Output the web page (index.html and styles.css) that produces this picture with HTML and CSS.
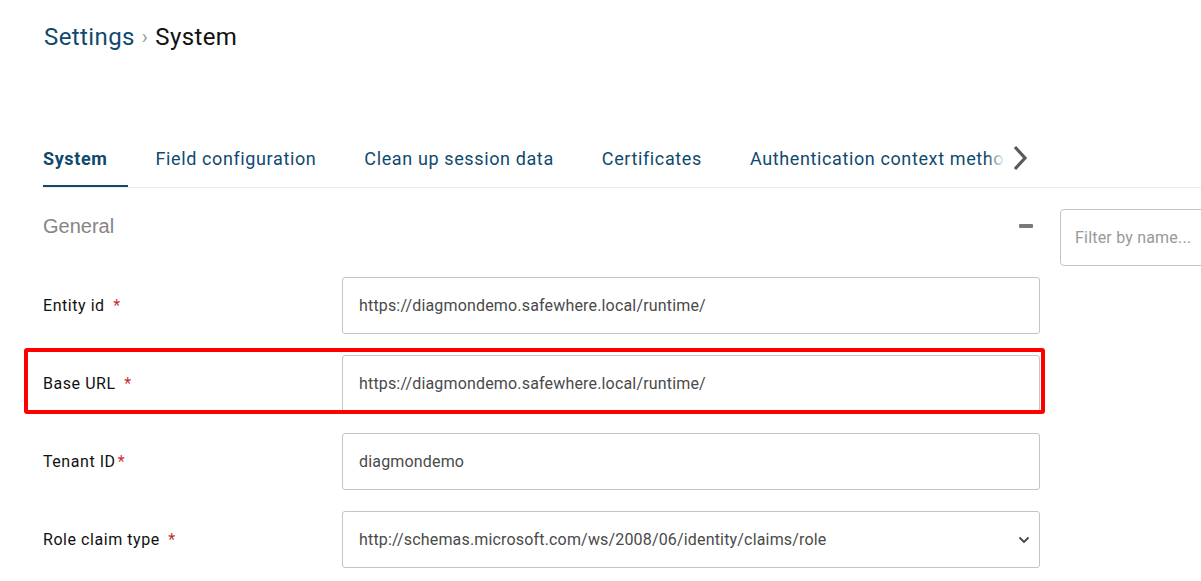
FILE: index.html
```html
<!DOCTYPE html>
<html>
<head>
<meta charset="utf-8">
<link rel="stylesheet" href="styles.css">
</head>
<body>
<div class="page">
  <div class="breadcrumb">
    <span class="crumb-link">Settings</span>
    <span class="crumb-sep">›</span>
    <span class="crumb-current">System</span>
  </div>

  <div class="tabbar">
    <div class="tabs-viewport">
      <div class="tabs">
        <div class="tab active">System</div>
        <div class="tab">Field configuration</div>
        <div class="tab">Clean up session data</div>
        <div class="tab">Certificates</div>
        <div class="tab">Authentication context methods</div>
      </div>
      <div class="tabs-fade"></div>
    </div>
    <button class="tabs-next" aria-label="Next">
      <svg width="20" height="26" viewBox="0 0 20 26"><path d="M5 2 L15 13 L5 24" fill="none" stroke="#5a5a5a" stroke-width="3.2" stroke-linecap="butt" stroke-linejoin="miter"/></svg>
    </button>
  </div>

  <div class="content">
    <div class="main">
      <div class="section-head">
        <span class="section-title">General</span>
        <span class="collapse"></span>
      </div>

      <div class="row">
        <label class="label">Entity id <span class="req">*</span></label>
        <div class="field">https://diagmondemo.safewhere.local/runtime/</div>
      </div>
      <div class="row highlighted">
        <label class="label">Base URL <span class="req">*</span></label>
        <div class="field">https://diagmondemo.safewhere.local/runtime/</div>
        <span class="annot"></span>
      </div>
      <div class="row">
        <label class="label">Tenant ID<span class="req tight">*</span></label>
        <div class="field">diagmondemo</div>
      </div>
      <div class="row">
        <label class="label">Role claim type <span class="req">*</span></label>
        <div class="field select">
          <span>http://schemas.microsoft.com/ws/2008/06/identity/claims/role</span>
          <svg class="caret" width="12" height="8" viewBox="0 0 12 8"><path d="M1.5 1.5 L6 6 L10.5 1.5" fill="none" stroke="#444" stroke-width="1.8"/></svg>
        </div>
      </div>
    </div>
    <div class="side">
      <div class="filter">Filter by name...</div>
    </div>
  </div>
</div>
</body>
</html>
```

FILE: styles.css
```css
html, body {
  margin: 0;
  padding: 0;
  background: #fff;
  overflow: hidden;
}
body {
  font-family: Roboto, "Liberation Sans", Arial, sans-serif;
  width: 1201px;
  height: 581px;
}
.page {
  padding-left: 43px;
}
.breadcrumb {
  padding-top: 22px;
  height: 30px;
  line-height: 30px;
  font-size: 24px;
  letter-spacing: 0.4px;
  display: flex;
  align-items: center;
}
.crumb-link {
  color: #0f4a6e;
  padding-left: 1px;
}
.crumb-sep {
  color: #999;
  font-size: 20px;
  margin: 0 7px 0 7px;
}
.crumb-current {
  color: #111;
}
.tabbar {
  margin-top: 76px;
  display: flex;
  align-items: stretch;
  border-bottom: 1px solid #ececec;
}
.tabs-viewport {
  position: relative;
  width: 967px;
  overflow: hidden;
}
.tabs {
  display: flex;
  white-space: nowrap;
}
.tab {
  font-size: 18px;
  letter-spacing: 0.62px;
  line-height: 24px;
  padding: 19px 21px 14px 0;
  margin-right: 27px;
  border-bottom: 2px solid transparent;
  color: #0f4a6e;
  flex: none;
}
.tab.active {
  font-weight: 700;
  letter-spacing: 0.6px;
  border-bottom-color: #0f4a6e;
  color: #0f4a6e;
}
.tabs-fade {
  position: absolute;
  top: 0;
  right: 0;
  width: 24px;
  height: 100%;
  background: linear-gradient(to right, rgba(255,255,255,0), #fff 80%);
}
.tabs-next {
  border: 0;
  background: none;
  padding: 0;
  margin: 0;
  width: 24px;
  display: flex;
  align-items: center;
  justify-content: flex-start;
  padding-bottom: 0;
}
.content {
  display: flex;
  gap: 20px;
}
.main {
  width: 997px;
  flex: none;
}
.section-head {
  height: 76px;
  display: flex;
  align-items: center;
  justify-content: space-between;
  margin-bottom: 13px;
}
.section-title {
  font-family: "Liberation Sans", Arial, sans-serif;
  font-size: 20px;
  color: #858585;
}
.collapse {
  width: 14px;
  height: 4px;
  border-radius: 1px;
  background: #7a7a7a;
  margin-right: 7px;
}
.row {
  position: relative;
  display: flex;
  align-items: center;
  height: 57px;
  margin-bottom: 21px;
}
.label {
  width: 299px;
  flex: none;
  font-size: 16px;
  color: #111;
  letter-spacing: 0.55px;
}
.req {
  color: #c9302c;
  margin-left: 4px;
}
.req.tight {
  margin-left: 2px;
}
.field {
  box-sizing: border-box;
  flex: 1;
  height: 57px;
  border: 1px solid #c4c4c4;
  border-radius: 3px;
  padding: 0 16px;
  display: flex;
  align-items: center;
  font-size: 16px;
  letter-spacing: 0.17px;
  color: #4a4a4a;
}
.field.select {
  justify-content: space-between;
  padding-right: 9px;
}
.caret {
  margin-top: 1px;
}
.annot {
  position: absolute;
  top: -7px;
  left: -19px;
  right: -5px;
  bottom: -2px;
  border: 4.5px solid #ff0000;
  border-radius: 3px;
  pointer-events: none;
}
.side {
  width: 260px;
  flex: none;
  padding-top: 21px;
}
.filter {
  box-sizing: border-box;
  height: 57px;
  border: 1px solid #c4c4c4;
  border-radius: 4px;
  padding: 0 14px;
  display: flex;
  align-items: center;
  font-size: 16px;
  letter-spacing: 0.2px;
  color: #999;
}
```
